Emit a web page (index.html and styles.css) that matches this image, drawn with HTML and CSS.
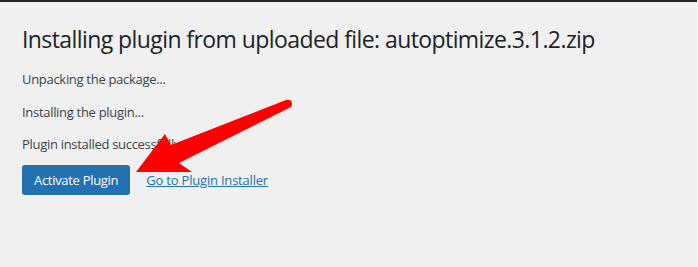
FILE: index.html
```html
<!DOCTYPE html>
<html lang="en">
<head>
<meta charset="utf-8">
<title>Installing plugin</title>
<link rel="stylesheet" href="styles.css">
</head>
<body>
<div class="topbar"></div>
<main class="wrap">
  <h1 class="title">Installing plugin from uploaded file: autoptimize.3.1.2.zip</h1>
  <p class="step">Unpacking the package...</p>
  <p class="step">Installing the plugin...</p>
  <p class="step">Plugin installed successfully.</p>
  <p class="actions">
    <a class="button" href="#">Activate Plugin</a>
    <a class="link" href="#">Go to Plugin Installer</a>
  </p>
</main>
<svg class="arrow" width="698" height="267" viewBox="0 0 698 267" aria-hidden="true">
  <path d="M136 172 L165 134 L171 145 L286 100 Q292 99 292 104 Q292 107 289 108 L179 163 L192 172 Z" fill="#ff0000"/>
</svg>
</body>
</html>
```
FILE: styles.css
```css
html, body {
  margin: 0;
  padding: 0;
}
body {
  background: #f0f0f1;
  font-family: "Open Sans", "Noto Sans", sans-serif;
  color: #3c434a;
  width: 698px;
  height: 267px;
  overflow: hidden;
  position: relative;
  box-sizing: border-box;
  border-right: 1px solid #f6f6f6;
}
.topbar {
  height: 2px;
  background: #1d2327;
}
.wrap {
  padding: 0 22px;
}
.title {
  margin: 0;
  padding-top: 22px;
  font-size: 23px;
  font-weight: 400;
  line-height: 30px;
  letter-spacing: -0.58px;
  color: #1d2327;
}
.step {
  margin: 0;
  font-size: 13px;
  line-height: 19.5px;
  margin-top: 13px;
  letter-spacing: -0.3px;
}
.title + .step {
  margin-top: 16px;
}
.actions {
  margin: 10px 0 0;
  display: flex;
  align-items: center;
  gap: 16px;
  font-size: 13px;
  letter-spacing: -0.3px;
}
.button {
  display: inline-block;
  background: #2271b1;
  color: #fff;
  text-decoration: none;
  border-radius: 3px;
  padding: 0 12px;
  line-height: 30px;
  height: 30px;
}
.link {
  color: #2271b1;
  text-decoration: underline;
  letter-spacing: -0.2px;
}
.arrow {
  position: absolute;
  left: 0;
  top: 0;
}
```
